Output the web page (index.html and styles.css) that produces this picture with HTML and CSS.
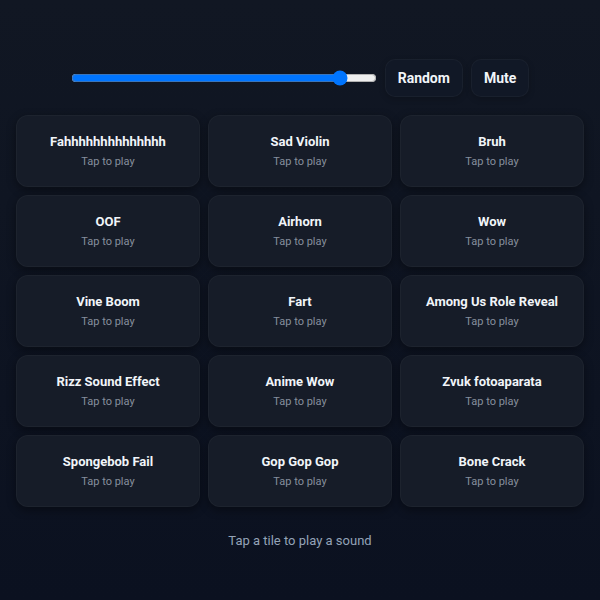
FILE: index.html
```html
<!DOCTYPE html>
<html>
  <head>
    <title>Soundboard</title>
    <meta charset='utf-8'>
    <link rel="stylesheet" href="styles.css">
  </head>
  <body>
    <div id='main'>
      <div class='controls'>
        <input id='volume' class='volume' type='range' min='0' max='100' value='90'>
        <button class='btn'>Random</button>
        <button class='btn'>Mute</button>
      </div>
      <div class='grid'>
        <button class='tile'><span class='name'>Fahhhhhhhhhhhhhh</span><span class='hint'>Tap to play</span></button>
        <button class='tile'><span class='name'>Sad Violin</span><span class='hint'>Tap to play</span></button>
        <button class='tile'><span class='name'>Bruh</span><span class='hint'>Tap to play</span></button>
        <button class='tile'><span class='name'>OOF</span><span class='hint'>Tap to play</span></button>
        <button class='tile'><span class='name'>Airhorn</span><span class='hint'>Tap to play</span></button>
        <button class='tile'><span class='name'>Wow</span><span class='hint'>Tap to play</span></button>
        <button class='tile'><span class='name'>Vine Boom</span><span class='hint'>Tap to play</span></button>
        <button class='tile'><span class='name'>Fart</span><span class='hint'>Tap to play</span></button>
        <button class='tile'><span class='name'>Among Us Role Reveal</span><span class='hint'>Tap to play</span></button>
        <button class='tile'><span class='name'>Rizz Sound Effect</span><span class='hint'>Tap to play</span></button>
        <button class='tile'><span class='name'>Anime Wow</span><span class='hint'>Tap to play</span></button>
        <button class='tile'><span class='name'>Zvuk fotoaparata</span><span class='hint'>Tap to play</span></button>
        <button class='tile'><span class='name'>Spongebob Fail</span><span class='hint'>Tap to play</span></button>
        <button class='tile'><span class='name'>Gop Gop Gop</span><span class='hint'>Tap to play</span></button>
        <button class='tile'><span class='name'>Bone Crack</span><span class='hint'>Tap to play</span></button>
      </div>
      <p class='status'>Tap a tile to play a sound</p>
    </div>
  </body>
</html>
```

FILE: styles.css
```css
html, body {
  height: 100%;
}

body {
  font-family: Roboto, "Liberation Sans", Arial, sans-serif;
  background: linear-gradient(180deg, #111723 0%, #0b1120 100%);
  color: #f1f5f9;
  margin: 0;
  padding: 0;
}

#main {
  padding: 59px 16px 0;
}

/* Top bar: volume + buttons. */
.controls {
  display: flex;
  justify-content: center;
  align-items: center;
  gap: 8px;
  margin-bottom: 18px;
}
.volume {
  width: 306px;
  margin: 0;
}
.btn {
  height: 38px;
  padding: 0 12px;
  font: 700 14px Roboto, "Liberation Sans", Arial, sans-serif;
  color: #f1f5f9;
  background: #111826;
  border: 1px solid rgba(255, 255, 255, 0.035);
  border-radius: 10px;
  box-shadow: 0 2px 6px rgba(0, 0, 0, 0.2);
}

/* Sound tiles. */
.grid {
  display: grid;
  grid-template-columns: repeat(3, 1fr);
  gap: 8px;
}
.tile {
  display: flex;
  flex-direction: column;
  align-items: center;
  justify-content: center;
  gap: 6px;
  height: 72px;
  padding: 0 8px;
  font-family: inherit;
  background: #161c28;
  border: 1px solid rgba(255, 255, 255, 0.03);
  border-radius: 12px;
  box-shadow: 0 3px 10px rgba(0, 0, 0, 0.4);
}
.name {
  font-size: 13px;
  font-weight: 700;
  color: #f1f5f9;
}
.hint {
  font-size: 11px;
  color: #868f9d;
}

.status {
  margin: 26px 0 0;
  text-align: center;
  font-size: 13px;
  color: #94a3b8;
}
```
